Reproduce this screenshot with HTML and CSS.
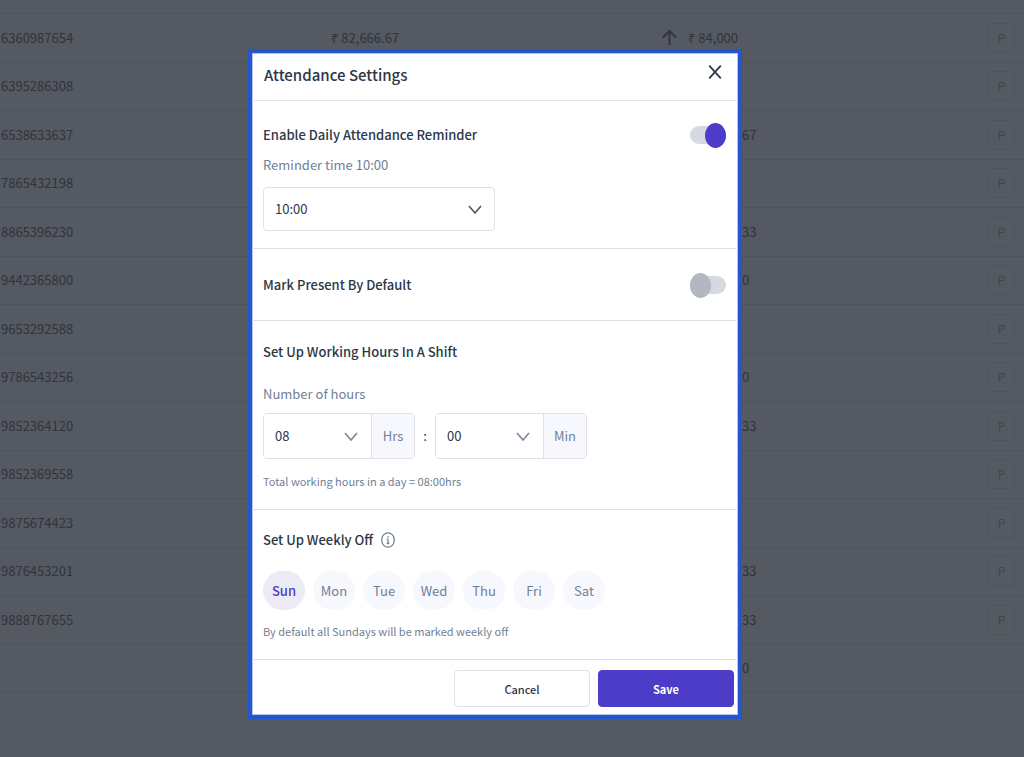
FILE: index.html
```
<!DOCTYPE html>
<html lang="en">
<head>
<meta charset="utf-8">
<meta name="viewport" content="width=device-width, initial-scale=1">
<title>Attendance Settings</title>
<link rel="stylesheet" href="styles.css">
</head>
<body>
<main class="page">
  <table class="staff">
    <colgroup><col class="col-phone"><col class="col-salary"><col class="col-due"><col><col class="col-action"></colgroup>
    <tbody>
      <tr><td>6360987654</td><td>₹ 82,666.67</td><td><span class="due"><svg class="arrow" viewBox="0 0 16 18" aria-hidden="true"><path d="M8 17V2M1 9l7-7 7 7"/></svg>₹ 84,000</span></td><td></td><td><button class="mark" type="button">P</button></td></tr>
      <tr><td>6395286308</td><td></td><td></td><td></td><td><button class="mark" type="button">P</button></td></tr>
      <tr><td>6538633637</td><td></td><td></td><td>67</td><td><button class="mark" type="button">P</button></td></tr>
      <tr><td>7865432198</td><td></td><td></td><td></td><td><button class="mark" type="button">P</button></td></tr>
      <tr><td>8865396230</td><td></td><td></td><td>33</td><td><button class="mark" type="button">P</button></td></tr>
      <tr><td>9442365800</td><td></td><td></td><td>0</td><td><button class="mark" type="button">P</button></td></tr>
      <tr><td>9653292588</td><td></td><td></td><td></td><td><button class="mark" type="button">P</button></td></tr>
      <tr><td>9786543256</td><td></td><td></td><td>0</td><td><button class="mark" type="button">P</button></td></tr>
      <tr><td>9852364120</td><td></td><td></td><td>33</td><td><button class="mark" type="button">P</button></td></tr>
      <tr><td>9852369558</td><td></td><td></td><td></td><td><button class="mark" type="button">P</button></td></tr>
      <tr><td>9875674423</td><td></td><td></td><td></td><td><button class="mark" type="button">P</button></td></tr>
      <tr><td>9876453201</td><td></td><td></td><td>33</td><td><button class="mark" type="button">P</button></td></tr>
      <tr><td>9888767655</td><td></td><td></td><td>33</td><td><button class="mark" type="button">P</button></td></tr>
      <tr><td></td><td></td><td></td><td>0</td><td></td></tr>
    </tbody>
  </table>
</main>

<div class="overlay">
  <form class="modal" role="dialog" aria-labelledby="title">
    <header class="modal-head">
      <h1 class="title" id="title">Attendance Settings</h1>
      <button class="close" type="button" aria-label="Close"><svg viewBox="0 0 14 16" aria-hidden="true"><path d="M1.2 1.700l11.600 12.600M12.800 1.700L1.200 14.300"/></svg></button>
    </header>

    <section class="section reminder">
      <div class="row">
        <label class="heading" for="reminder">Enable Daily Attendance Reminder</label>
        <input class="toggle" type="checkbox" id="reminder" checked>
      </div>
      <label class="label" for="time">Reminder time 10:00</label>
      <div class="select-wrap time">
        <select class="select" id="time"><option>10:00</option></select>
        <svg class="chevron dark" viewBox="0 0 14 10" aria-hidden="true"><path d="M1 2l6 7 6-7"/></svg>
      </div>
    </section>

    <section class="section present">
      <div class="row">
        <label class="heading" for="present">Mark Present By Default</label>
        <input class="toggle" type="checkbox" id="present">
      </div>
    </section>

    <section class="section shift">
      <h2 class="heading">Set Up Working Hours In A Shift</h2>
      <label class="label" for="hours">Number of hours</label>
      <div class="duration">
        <div class="group">
          <div class="select-wrap">
            <select class="select" id="hours"><option>08</option></select>
            <svg class="chevron" viewBox="0 0 14 10" aria-hidden="true"><path d="M1 2l6 7 6-7"/></svg>
          </div>
          <span class="unit">Hrs</span>
        </div>
        <span class="colon">:</span>
        <div class="group">
          <div class="select-wrap">
            <select class="select" id="minutes" aria-label="Minutes"><option>00</option></select>
            <svg class="chevron" viewBox="0 0 14 10" aria-hidden="true"><path d="M1 2l6 7 6-7"/></svg>
          </div>
          <span class="unit">Min</span>
        </div>
      </div>
      <p class="note">Total working hours in a day = 08:00hrs</p>
    </section>

    <section class="section weekly">
      <h2 class="heading with-icon">Set Up Weekly Off
        <svg class="info" viewBox="0 0 14 16" aria-hidden="true"><ellipse cx="7" cy="8" rx="6.3" ry="7.2"/><path d="M7 7.2v4.3M5.8 7.2H7M5.7 11.5h2.6M7 4v1.4"/></svg>
      </h2>
      <div class="days">
        <button class="day active" type="button" aria-pressed="true">Sun</button>
        <button class="day" type="button">Mon</button>
        <button class="day" type="button">Tue</button>
        <button class="day" type="button">Wed</button>
        <button class="day" type="button">Thu</button>
        <button class="day" type="button">Fri</button>
        <button class="day" type="button">Sat</button>
      </div>
      <p class="note">By default all Sundays will be marked weekly off</p>
    </section>

    <footer class="modal-foot">
      <button class="btn" type="button">Cancel</button>
      <button class="btn primary" type="submit">Save</button>
    </footer>
  </form>
</div>
</body>
</html>
```
FILE: styles.css
```
* { box-sizing: border-box; }

body {
  margin: 0;
  background: #555961;
  color: #2d3748;
  font-family: "Noto Sans CJK JP", "Noto Sans", sans-serif;
  font-size: 13px;
  line-height: 20px;
}

h1, h2, p { margin: 0; }
button, select { font: inherit; color: inherit; }
svg { display: block; fill: none; stroke: currentColor; }

/* Staff list behind the dialog */
.page { padding-top: 13px; min-height: 100vh; }

.staff {
  width: 100%;
  height: 680px;
  table-layout: fixed;
  border-collapse: collapse;
  border-top: 1px solid #4f535b;
  color: #30343d;
}

.staff tr { border-bottom: 1px solid #4f535b; }
.staff td { height: 48px; padding: 0 0 0 1px; vertical-align: middle; white-space: nowrap; }
.col-phone { width: 330px; }
.col-salary { width: 331px; }
.col-due { width: 80px; }
.col-action { width: 37px; }

.due { display: flex; align-items: center; gap: 11px; }
.arrow { width: 15px; height: 17px; flex: none; stroke-width: 2; }

.mark {
  display: block;
  width: 27px;
  height: 30px;
  padding: 0;
  background: none;
  border: 1px solid #4f535b;
  border-radius: 4px;
  color: #41454e;
  font-size: 12px;
}

/* Dialog */
.overlay {
  position: fixed;
  inset: 0;
  display: flex;
  justify-content: center;
  align-items: flex-start;
  padding: 49px 34px 0 0;
  overflow: auto;
}

.modal {
  width: 100%;
  max-width: 494px;
  background: #fff;
  border: 4px solid #2457cf;
  box-shadow: inset 0 0 0 1px #b4c5f2;
}

.modal-head {
  display: flex;
  align-items: flex-start;
  justify-content: space-between;
  padding: 10px 16px 13px 12px;
  border-bottom: 1px solid #e2e4e8;
}

.title { font-size: 15px; font-weight: 500; line-height: 24px; }
.close { padding: 1px 0; border: 0; background: none; }
.close svg { width: 14px; height: 16px; stroke-width: 1.8; }

.section {
  display: flex;
  flex-direction: column;
  padding: 0 12px 0 11px;
  border-bottom: 1px solid #dcdfe7;
}

.row { display: flex; align-items: center; justify-content: space-between; }
.heading { font-size: 13px; font-weight: 500; line-height: 20px; }
.label { color: #718096; }
.note { color: #718096; font-size: 11px; }

.toggle {
  appearance: none;
  display: flex;
  align-items: center;
  width: 36px;
  height: 18px;
  margin: 0;
  border-radius: 9px;
  background: #d6d9e0;
}

.toggle::before {
  content: "";
  flex: none;
  width: 21px;
  height: 25px;
  border-radius: 50%;
  background: #b3b7c0;
}

.toggle:checked { justify-content: flex-end; }
.toggle:checked::before { background: #4c3cc8; }

.reminder { padding-top: 24px; padding-bottom: 17px; }
.reminder .label { margin: 10px 0 12px; }
.present { padding-top: 26px; padding-bottom: 25px; }
.shift { padding-top: 21px; padding-bottom: 18px; }
.shift .label { margin: 22px 0 9px; }
.shift .note { margin-top: 12px; }
.weekly { padding-top: 20px; padding-bottom: 18px; }

.select-wrap { display: grid; align-items: center; flex: 1; }

.select {
  grid-area: 1 / 1;
  appearance: none;
  width: 100%;
  height: 44px;
  padding: 0 11px;
  border: 1px solid #dfe1e6;
  border-radius: 4px;
  background: #fff;
}

.chevron {
  grid-area: 1 / 1;
  justify-self: end;
  width: 14px;
  height: 10px;
  margin-right: 13px;
  color: #7b869a;
  stroke-width: 1.6;
  pointer-events: none;
}

.chevron.dark { color: #4f5766; }
.time { max-width: 232px; }

.duration { display: flex; align-items: center; gap: 8px; }

.group {
  display: flex;
  width: 152px;
  height: 46px;
  border: 1px solid #dfe1e6;
  border-radius: 4px;
  overflow: hidden;
}

.group .select { border: 0; border-radius: 0; }

.unit {
  display: flex;
  align-items: center;
  justify-content: center;
  width: 43px;
  border-left: 1px solid #dfe1e6;
  background: #f7f8fd;
  color: #718096;
}

.colon { width: 4px; text-align: center; }

.with-icon { display: flex; align-items: center; gap: 8px; }
.info { width: 14px; height: 16px; color: #718096; stroke-width: 1.3; }

.days { display: flex; gap: 8px; margin: 21px 0 11px; }

.day {
  width: 42px;
  height: 39px;
  padding: 0;
  border: 0;
  border-radius: 20px;
  background: #f7f8fd;
  color: #718096;
}

.day.active { background: #ecebf3; color: #4c3cc8; font-weight: 500; }

.modal-foot {
  display: flex;
  justify-content: flex-end;
  gap: 8px;
  padding: 10px 4px 8px;
}

.btn {
  width: 136px;
  height: 37px;
  padding: 0;
  border: 1px solid #dfe1e6;
  border-radius: 4px;
  background: #fff;
  font-size: 11px;
  font-weight: 500;
}

.btn.primary { background: #4c3cc8; border-color: #4c3cc8; color: #fff; font-weight: 700; }
```
